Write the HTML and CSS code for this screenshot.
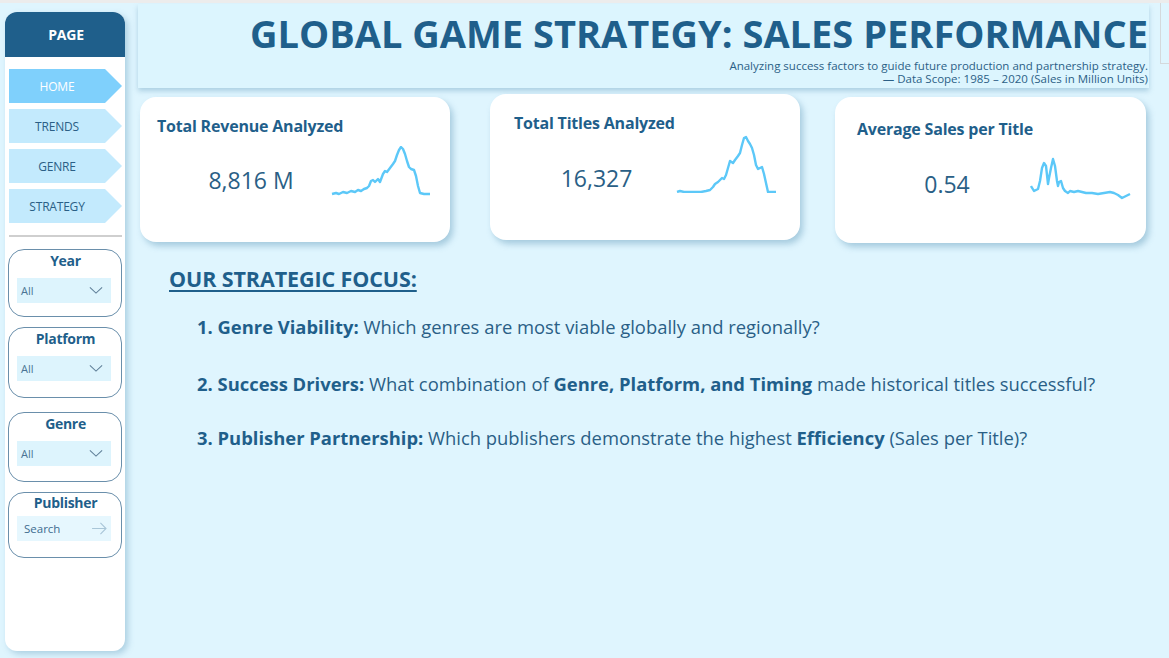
FILE: index.html
```html
<!DOCTYPE html>
<html>
<head>
<meta charset="utf-8">
<link rel="stylesheet" href="styles.css">
</head>
<body>
<div class="app">
  <aside class="sidebar">
    <div class="side-head">PAGE</div>
    <nav class="nav">
      <div class="nav-btn active">HOME</div>
      <div class="nav-btn">TRENDS</div>
      <div class="nav-btn">GENRE</div>
      <div class="nav-btn">STRATEGY</div>
    </nav>
    <div class="divider"></div>
    <div class="filter f-year">
      <div class="f-title">Year</div>
      <div class="dd"><span>All</span><svg class="chev" viewBox="0 0 16 10" width="14" height="9"><path d="M1 1.5 L8 8 L15 1.5" fill="none" stroke="#5f7f98" stroke-width="1.2"/></svg></div>
    </div>
    <div class="filter f-platform">
      <div class="f-title">Platform</div>
      <div class="dd"><span>All</span><svg class="chev" viewBox="0 0 16 10" width="14" height="9"><path d="M1 1.5 L8 8 L15 1.5" fill="none" stroke="#5f7f98" stroke-width="1.2"/></svg></div>
    </div>
    <div class="filter f-genre">
      <div class="f-title">Genre</div>
      <div class="dd"><span>All</span><svg class="chev" viewBox="0 0 16 10" width="14" height="9"><path d="M1 1.5 L8 8 L15 1.5" fill="none" stroke="#5f7f98" stroke-width="1.2"/></svg></div>
    </div>
    <div class="filter f-publisher">
      <div class="f-title">Publisher</div>
      <div class="dd search"><span>Search</span><svg class="arrow" viewBox="0 0 18 14" width="17" height="13"><path d="M1 7 H16 M10 1 L16 7 L10 13" fill="none" stroke="#a9c6d8" stroke-width="1.2"/></svg></div>
    </div>
  </aside>

  <main class="main">
    <header class="header">
      <h1 class="title">GLOBAL GAME STRATEGY: SALES PERFORMANCE</h1>
      <p class="subtitle">Analyzing success factors to guide future production and partnership strategy.<br>— Data Scope: 1985 – 2020 (Sales in Million Units)</p>
    </header>

    <section class="cards">
      <div class="card card-1">
        <div class="card-title">Total Revenue Analyzed</div>
        <div class="kpi-row">
          <div class="kpi-value">8,816 M</div>
          <svg class="spark" viewBox="0 0 100 50" width="100" height="50"><polyline fill="none" stroke="#5cc8f8" stroke-width="2.4" stroke-linejoin="round" points="1,48 5,47 8,48 12,46 16,47 20,45 24,46 27,44 30,45 33,43 36,42 38,40 40,35 42,34 44,36 47,33 49,36 52,28 54,25 56,26 59,22 62,18 64,15 66,9 68,4 70,1 72,3 74,8 76,15 78,21 80,23 83,24 85,30 87,40 89,47 93,48 99,48"/></svg>
        </div>
      </div>
      <div class="card card-2">
        <div class="card-title">Total Titles Analyzed</div>
        <div class="kpi-row">
          <div class="kpi-value">16,327</div>
          <svg class="spark" viewBox="0 0 101 58" width="101" height="58"><polyline fill="none" stroke="#5cc8f8" stroke-width="2.4" stroke-linejoin="round" points="1,57 4,56 8,57 15,57 25,57 30,56 34,55 37,52 39,49 42,47 44,45 46,43 48,44 50,40 52,33 54,26 57,28 59,25 62,21 64,18 66,10 68,3 70,2 72,6 74,9 76,13 78,20 80,30 82,34 84,33 86,32 88,39 90,48 92,57 96,57 100,57"/></svg>
        </div>
      </div>
      <div class="card card-3">
        <div class="card-title">Average Sales per Title</div>
        <div class="kpi-row">
          <div class="kpi-value">0.54</div>
          <svg class="spark" viewBox="0 0 101 44" width="101" height="44"><polyline fill="none" stroke="#5cc8f8" stroke-width="2.4" stroke-linejoin="round" points="1,30 4,35 8,33 10,25 12,12 14,7 16,10 18,28 19,22 21,12 23,3 25,10 27,25 28,30 29,26 31,25 33,32 35,35 38,37 40,35 44,36 48,35 52,36 56,37 62,37 68,38 74,37 80,36 84,37 88,39 92,42 96,40 100,38"/></svg>
        </div>
      </div>
    </section>

    <section class="focus">
      <h2 class="focus-title">OUR STRATEGIC FOCUS:</h2>
      <ol class="focus-list">
        <li><b>1. Genre Viability:</b> Which genres are most viable globally and regionally?</li>
        <li><b>2. Success Drivers:</b> What combination of <b>Genre, Platform, and Timing</b> made historical titles successful?</li>
        <li><b>3. Publisher Partnership:</b> Which publishers demonstrate the highest <b>Efficiency</b> (Sales per Title)?</li>
      </ol>
    </section>
  </main>
  <div class="canvas-edge"></div>
</div>
</body>
</html>
```

FILE: styles.css
```css
* { box-sizing: border-box; }
html, body { margin: 0; padding: 0; }
body {
  width: 1169px;
  height: 658px;
  overflow: hidden;
  background: #dff5fe;
  border-top: 3px solid #ececec;
  font-family: "Open Sans", "Noto Sans", sans-serif;
  color: #1f5f8b;
}
.app { display: flex; align-items: flex-start; position: relative; }

/* thin canvas boundary at the far right edge */
.canvas-edge {
  position: absolute;
  left: 1160px;
  top: -3px;
  width: 9px;
  height: 64px;
  border-left: 1px solid #d4d9dc;
  border-bottom: 1px solid #d4d9dc;
}

/* Sidebar */
.sidebar {
  width: 120px;
  height: 639px;
  margin: 9px 0 0 5px;
  background: #fff;
  border-radius: 12px;
  box-shadow: 3px 3px 6px rgba(80, 140, 175, 0.35);
  display: flex;
  flex-direction: column;
  overflow: hidden;
  flex: none;
}
.side-head {
  height: 45px;
  background: #1f5f8b;
  color: #fff;
  font-weight: 700;
  font-size: 14px;
  display: flex;
  align-items: center;
  justify-content: center;
  letter-spacing: -0.2px;
  padding-left: 2px;
}
.nav { display: flex; flex-direction: column; gap: 6px; padding: 12px 3px 0 4px; }
.nav-btn {
  height: 34px;
  background: #c3eafd;
  color: #2b5f86;
  font-size: 12px;
  display: flex;
  align-items: center;
  justify-content: center;
  padding-right: 17px;
  padding-top: 1px;
  letter-spacing: -0.2px;
  clip-path: polygon(0 0, calc(100% - 17px) 0, 100% 50%, calc(100% - 17px) 100%, 0 100%);
}
.nav-btn.active { background: #7fd0fc; color: #fff; }
.divider { height: 2px; background: #cfcfcf; margin: 12px 3px 0 4px; }

.filter {
  margin: 0 3px 0 3px;
  border: 1px solid #6a8fab;
  border-radius: 16px;
  padding: 0 10px 0 8px;
}
.f-year { margin-top: 12px; height: 68px; }
.f-platform { margin-top: 10px; height: 71px; }
.f-genre { margin-top: 14px; height: 70px; }
.f-publisher { margin-top: 10px; height: 66px; }
.f-title {
  text-align: center;
  font-weight: 700;
  font-size: 14px;
  line-height: 18px;
  margin-top: 2px;
  padding-left: 3px;
  letter-spacing: -0.3px;
}
.f-publisher .f-title { margin-top: 1px; }
.dd {
  margin-top: 8px;
  height: 25px;
  background: #ddf4fd;
  display: flex;
  align-items: center;
  justify-content: space-between;
  padding: 0 8px 0 4px;
  font-size: 11px;
  color: #4a7494;
}
.dd.search { background: #e6f7fe; padding-left: 7px; padding-right: 3px; margin-top: 4px; color: #3d6c8f; font-size: 11.5px; }

/* Main */
.main { margin-left: 13px; flex: 1; }
.header {
  width: 1011px;
  height: 84px;
  margin-top: 1px;
  background: #dcf5fe;
  box-shadow: 0 3px 5px rgba(90, 150, 185, 0.38);
  text-align: right;
  padding-right: 1px;
}
.title {
  margin: 0;
  padding-top: 3px;
  font-size: 38px;
  line-height: 52px;
  font-weight: 700;
  color: #1f5f8b;
  letter-spacing: 0;
}
.subtitle {
  margin: 0;
  font-size: 11.5px;
  line-height: 13px;
  color: #2b5f86;
}

.cards { display: flex; align-items: flex-start; margin-top: 5px; }
.card {
  background: #fff;
  border-radius: 16px;
  box-shadow: 3px 4px 6px rgba(80, 140, 175, 0.4);
  flex: none;
}
.card-title { font-size: 16px; line-height: 20px; font-weight: 700; color: #1f5f8b; letter-spacing: -0.2px; }
.kpi-row { display: flex; align-items: flex-start; }
.kpi-value { flex: none; text-align: center; font-size: 23px; line-height: 30px; color: #2a5f86; }
.spark { flex: none; display: block; }

.card-1 { width: 310px; height: 145px; margin: 4px 0 0 2px; padding: 19px 0 0 17px; }
.card-1 .kpi-row { margin: 10px 0 0 14px; }
.card-1 .kpi-value { width: 160px; margin-top: 19px; }

.card-2 { width: 310px; height: 146px; margin: 1px 0 0 40px; padding: 19px 0 0 24px; }
.card-2 .kpi-row { margin: 2px 0 0 3px; }
.card-2 .kpi-value { width: 159px; margin-top: 28px; }

.card-3 { width: 311px; height: 146px; margin: 4px 0 0 35px; padding: 22px 0 0 22px; }
.card-3 .kpi-row { margin: 17px 0 0 7px; }
.card-3 .kpi-value { width: 166px; margin-top: 13px; }

.focus { padding-left: 31px; margin-top: 22px; }
.focus-title {
  margin: 0;
  font-size: 21.5px;
  line-height: 28px;
  font-weight: 700;
  text-decoration: underline;
  text-decoration-thickness: 2px;
  text-underline-offset: 3px;
  color: #1f5f8b;
  letter-spacing: -0.1px;
}
.focus-list { list-style: none; margin: 0; padding: 0 0 0 28px; }
.focus-list li {
  font-size: 18.4px;
  line-height: 24px;
  color: #2a5f86;
}
.focus-list li:nth-child(1) { margin-top: 22px; }
.focus-list li:nth-child(2) { margin-top: 33px; }
.focus-list li:nth-child(3) { margin-top: 30px; }
.focus-list b { color: #1f5f8b; font-weight: 700; }
```
